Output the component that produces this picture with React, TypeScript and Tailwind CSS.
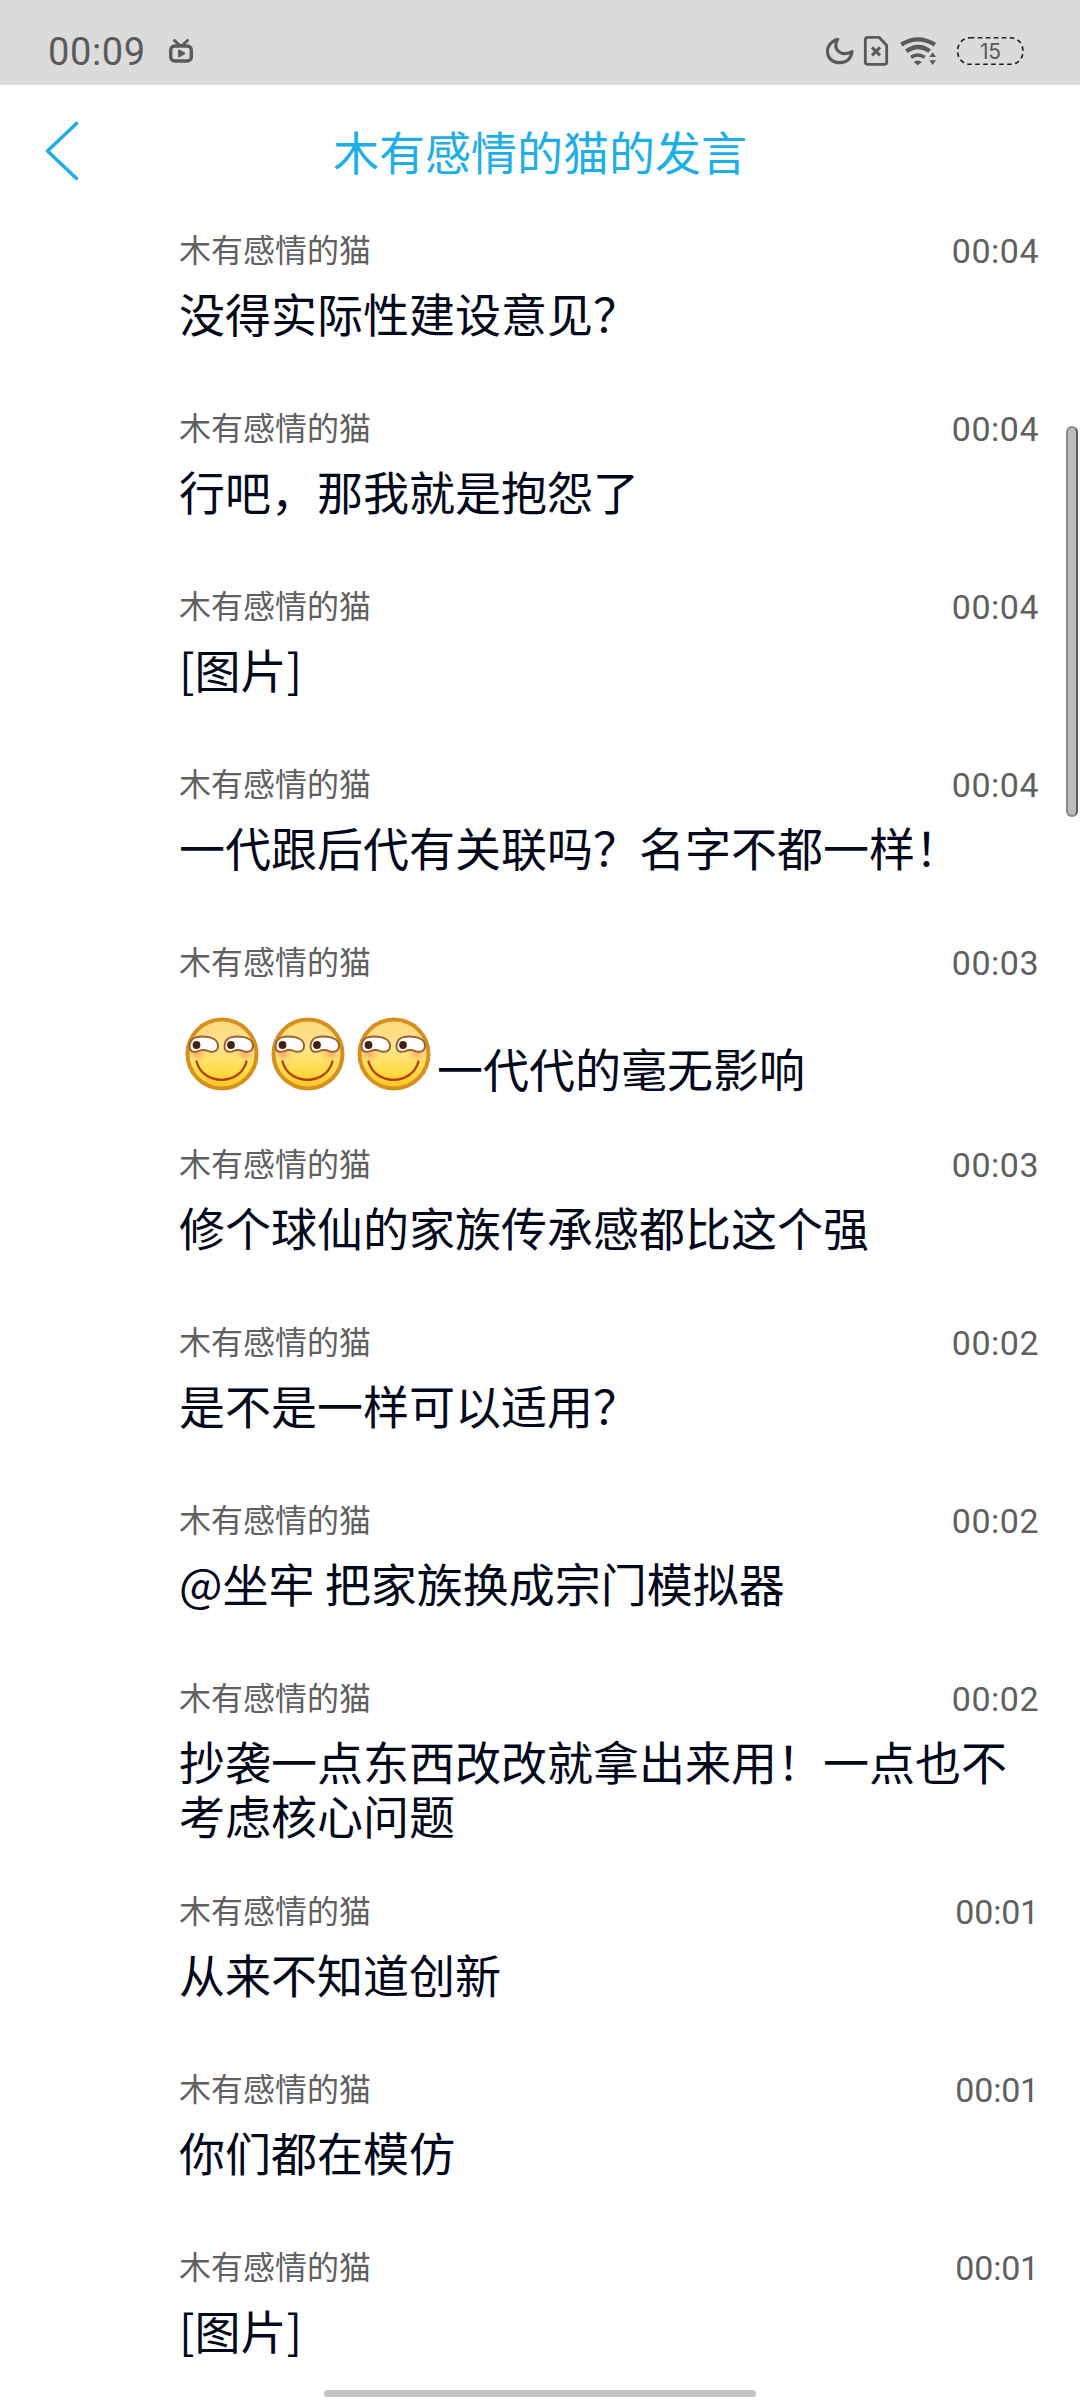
import React from "react";

type Message = { time: string; text: string; smirks?: number };

const AUTHOR = "木有感情的猫";

const messages: Message[] = [
  { time: "00:04", text: "没得实际性建设意见？" },
  { time: "00:04", text: "行吧，那我就是抱怨了" },
  { time: "00:04", text: "[图片]" },
  { time: "00:04", text: "一代跟后代有关联吗？名字不都一样！" },
  { time: "00:03", text: "一代代的毫无影响", smirks: 3 },
  { time: "00:03", text: "修个球仙的家族传承感都比这个强" },
  { time: "00:02", text: "是不是一样可以适用？" },
  { time: "00:02", text: "@坐牢 把家族换成宗门模拟器" },
  { time: "00:02", text: "抄袭一点东西改改就拿出来用！一点也不考虑核心问题" },
  { time: "00:01", text: "从来不知道创新" },
  { time: "00:01", text: "你们都在模仿" },
  { time: "00:01", text: "[图片]" },
];

function Smirk() {
  return (
    <svg viewBox="0 0 86 80" className="inline-block h-[80px] w-[86px] shrink-0">
      <defs>
        <linearGradient id="face" x1="0" y1="0" x2="0" y2="1">
          <stop offset="0" stopColor="#ffd878" />
          <stop offset="0.4" stopColor="#ffe590" />
          <stop offset="0.75" stopColor="#ffdc48" />
          <stop offset="1" stopColor="#fdc21f" />
        </linearGradient>
        <radialGradient id="blush">
          <stop offset="0" stopColor="#fb9a62" stopOpacity="0.75" />
          <stop offset="1" stopColor="#fb9a62" stopOpacity="0" />
        </radialGradient>
      </defs>
      <circle cx="43" cy="40" r="34.500" fill="url(#face)" stroke="#d5901f" strokeWidth="4" />
      <ellipse cx="18.500" cy="40" rx="10" ry="6.500" fill="url(#blush)" />
      <ellipse cx="66" cy="40" rx="10" ry="6.500" fill="url(#blush)" />
      <g fill="#fff" stroke="#99602c" strokeWidth="1.900">
        <path d="M10.500 32 C11 25 15 22.500 23 22.500 C33 22.500 39 26 39 32 C39 37.500 34 38.500 30 37.300 C26 35.800 23 35.300 20 36.800 C14 39 10.500 37.500 10.500 32 Z" />
        <path d="M45.500 32 C46 25 50 22.500 58 22.500 C68 22.500 74 26 74 32 C74 37.500 69 38.500 65 37.300 C61 35.800 58 35.300 55 36.800 C49 39 45.500 37.500 45.500 32 Z" />
      </g>
      <circle cx="17.500" cy="31" r="3.900" fill="#46200f" />
      <circle cx="52" cy="31" r="3.900" fill="#46200f" />
      <path d="M17.500 47.500 C24 72 61 72 67.500 47.500" fill="none" stroke="#b23c0a" strokeWidth="2.300" strokeLinecap="round" />
    </svg>
  );
}

function StatusBar() {
  return (
    <div className="flex h-[85px] shrink-0 items-start bg-[#dbdbdb] text-[#5a5a5a]">
      <span className="mt-[32px] ml-[48px] w-[120px] font-[Roboto] text-[38px] leading-[40px] tracking-[0.6px]">00:09</span>
      <svg viewBox="0 0 24 24" className="mt-[39px] h-[24px] w-[26px]" fill="none" stroke="currentColor" strokeWidth="3.400" strokeLinecap="round" strokeLinejoin="round">
        <rect x="1.700" y="7" width="20.600" height="15" rx="4" />
        <path d="M5.500 1.500 L11 6.500 M18.500 1.500 L13 6.500" strokeWidth="3" />
        <path d="M10 11.300 L15.300 14.400 L10 17.500 Z" fill="currentColor" strokeWidth="1.800" />
      </svg>
      <div className="mt-[36px] mr-[56px] ml-auto flex items-start">
        <svg viewBox="138 108 336 96" className="h-[32px] w-[112px]" fill="none" stroke="currentColor" strokeLinejoin="round">
          <path d="M173 118 C128 132 134 188 180 188 C202 187 213 173 216 155 C183 172 156 148 173 118 Z" strokeWidth="9.500" />
          <path d="M264 112 H297 L320 136 V186 Q320 193 313 193 H264 Q256 193 256 186 V119 Q256 112 264 112 Z" strokeWidth="8.500" />
          <path d="M276 142 L300 166 M300 142 L276 166" strokeWidth="9" />
          <path d="M364 134 Q413 102 465 134" strokeWidth="13" />
          <path d="M379 154 Q413 129 449 153" strokeWidth="13" />
          <path d="M393 172 Q413 158 434 172" strokeWidth="11" />
          <path d="M401 186 Q413 177 426 186 L413 196 Z" fill="currentColor" stroke="none" />
          <path d="M458 152 L444 174 V198 H472 V174 Z" fill="#dbdbdb" stroke="none" />
          <path d="M458 157 L468 171 H448 Z M448 181 H468 L458 195 Z" fill="currentColor" stroke="none" />
        </svg>
        <div className="relative ml-[19px] h-[30px] w-[67px]">
          <svg viewBox="0 0 67 30" className="absolute inset-0 h-full w-full" fill="none">
            <rect x="0.800" y="1.800" width="65" height="26.500" rx="12" stroke="#1c1c1c" strokeWidth="1.600" strokeDasharray="4.600 3.400" />
          </svg>
          <span className="absolute top-[3px] left-[23px] font-[Inter] text-[21px] leading-[25px] tracking-[-0.2px]">15</span>
        </div>
      </div>
    </div>
  );
}

export default function App() {
  return (
    <div className="relative flex h-[2400px] w-[1080px] flex-col overflow-hidden bg-white font-['Noto_Sans_CJK_SC',sans-serif]">
      <StatusBar />
      <header className="flex h-[135px] shrink-0 items-center px-[45px] pb-[4px]">
        <svg viewBox="0 0 36 60" className="h-[60px] w-[36px]" fill="none" stroke="#22aee6" strokeWidth="3.600" strokeLinecap="round" strokeLinejoin="round">
          <path d="M31.500 2.500 L2.500 30 L31.500 57.500" />
        </svg>
        <h1 className="mt-[-1px] mr-[36px] flex-1 text-center text-[46px] leading-[60px] text-[#1fafe8]">木有感情的猫的发言</h1>
      </header>
      <main className="flex flex-col">
        {messages.map((m, i) => (
          <article key={i} className="min-h-[178px] shrink-0 pr-[41px] pb-[40px] pl-[179px]">
            <div className="flex h-[65px] justify-between text-[#606060]">
              <span className="pt-[5px] text-[32px] leading-[46px]">{AUTHOR}</span>
              <time
                className={
                  m.time.endsWith("1")
                    ? "pt-[8px] font-[Roboto] text-[34px] leading-[46px] tracking-[-0.2px]"
                    : "pt-[8px] font-[Roboto] text-[34px] leading-[46px] tracking-[0.5px]"
                }
              >
                {m.time}
              </time>
            </div>
            {m.smirks ? (
              <div className="flex h-[97px] items-end text-[46px] leading-[54px] text-[#03081a]">
                {Array.from({ length: m.smirks }, (_, k) => (
                  <Smirk key={k} />
                ))}
                <span>{m.text}</span>
              </div>
            ) : (
              <p className="text-[46px] leading-[54px] text-[#03081a]">{m.text}</p>
            )}
          </article>
        ))}
      </main>
      <div className="absolute top-[426px] right-[2px] h-[391px] w-[12px] rounded-full border-2 border-[#8a8a8a] border-r-[#5c5c5c] bg-[#bcbcbc]" />
      <div className="absolute top-[2390px] left-[324px] h-[7px] w-[432px] rounded-full bg-[#c2c2c2]" />
    </div>
  );
}
